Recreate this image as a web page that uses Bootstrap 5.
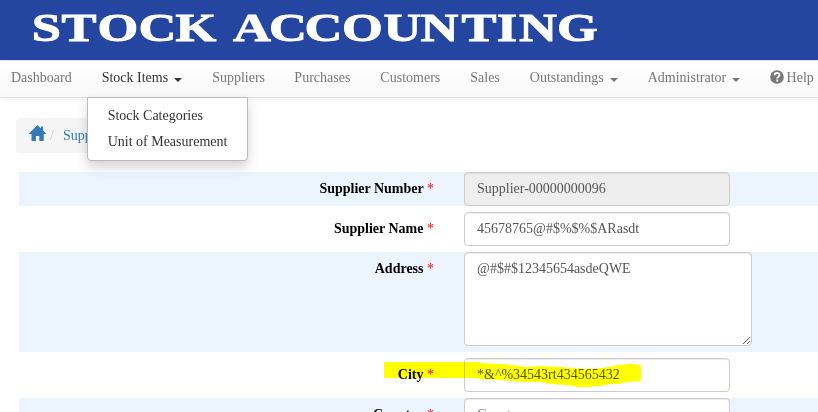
<!DOCTYPE html>
<html lang="en">
<head>
<meta charset="utf-8">
<meta name="viewport" content="width=device-width, initial-scale=1">
<title>Stock Accounting</title>
<link rel="stylesheet" href="https://cdn.jsdelivr.net/npm/bootstrap@5.3.0/dist/css/bootstrap.min.css">
<style>
body{font-family:"Liberation Serif",serif;font-size:14px;line-height:20px;height:412px;overflow:hidden;color:#333}
.banner{background:#2446a0;height:60px}
.banner text{font-family:"Liberation Serif",serif;font-weight:700;font-size:41px;fill:#fff;stroke:#fff;stroke-width:.9px;text-anchor:middle}
.main-nav{height:38px;padding:0;border-top:1px solid #e7e7e7;border-bottom:1px solid #e1e1e1;background:linear-gradient(#fff,#f8f8f8);box-shadow:0 1px 5px rgba(0,0,0,.075);z-index:5}
.main-nav .navbar-nav{margin-left:-4px}
.main-nav .nav-link{padding:7px 15px 9px!important;color:#777;white-space:nowrap}
.main-nav .nav-link.active{color:#333}
.main-nav .nav-item.snug{margin-left:-.7px}
.main-nav .dropdown-toggle::after{margin-left:6px;border-top-width:4px;border-left-width:4px;border-right-width:4px;vertical-align:0}
.main-nav .dropdown-menu{position:absolute;top:36px;left:0;min-width:161px;width:161px;height:64px;padding:5px 0;margin:0;border:1px solid #bbb;border-radius:0 0 4px 4px;box-shadow:0 6px 12px rgba(0,0,0,.175);font-size:14px}
.main-nav .dropdown-item{padding:3px 20px;color:#333}
.help-icon{margin:2px 3px 0 0}
.trail{height:35px;background:#f5f5f5;border-radius:4px;margin:20px 15px 0 16px;padding:0 13px;width:140px}
.trail a{color:#337ab7}
.trail .home-link{margin-bottom:4px}
.trail .divider{color:#ccc;margin:0 9px 0 4px}
.entry{margin:19px 0 0 19px}
.entry-row{min-height:34px;margin-bottom:6px}
.entry-row:nth-child(odd){background:#ebf4ff}
.entry-label{width:415px;padding-top:7px;font-weight:700;color:#000;text-align:right;white-space:pre}
.entry-label span{color:red;font-weight:400}
.entry .form-control{width:266px;height:34px;margin-left:30px;padding:6px 12px;font:14px/20px "Liberation Serif",serif;color:#555;border:1px solid #ccc;border-radius:4px;box-shadow:inset 0 1px 1px rgba(0,0,0,.075)}
.entry .form-control:disabled{background:#eee}
.entry textarea.form-control{width:288px;height:94px;min-height:94px;margin-bottom:6px;resize:both}
.entry .form-control::placeholder{color:#777}
.marker{left:365px;top:4px;mix-blend-mode:multiply;pointer-events:none}
</style>
</head>
<body>
<header class="banner">
<svg class="d-block" width="818" height="60" role="img">
<g transform="scale(1.28 1)">
<text y="41.5" x="36.3 61.7 92.2 123 153.1">STOCK</text>
<text y="41.5" x="196.9 225 252.7 283.2 314.5 343.4 374.2 396.1 420.3 451.2">ACCOUNTING</text>
</g>
</svg>
</header>
<nav class="navbar navbar-expand main-nav align-items-start">
<ul class="navbar-nav">
<li class="nav-item"><a class="nav-link" href="#">Dashboard</a></li>
<li class="nav-item dropdown"><a class="nav-link active dropdown-toggle" href="#">Stock Items</a>
<ul class="dropdown-menu show">
<li><a class="dropdown-item" href="#">Stock Categories</a></li>
<li><a class="dropdown-item" href="#">Unit of Measurement</a></li>
</ul></li>
<li class="nav-item"><a class="nav-link" href="#">Suppliers</a></li>
<li class="nav-item snug"><a class="nav-link" href="#">Purchases</a></li>
<li class="nav-item"><a class="nav-link" href="#">Customers</a></li>
<li class="nav-item"><a class="nav-link" href="#">Sales</a></li>
<li class="nav-item"><a class="nav-link dropdown-toggle" href="#">Outstandings</a></li>
<li class="nav-item"><a class="nav-link dropdown-toggle" href="#">Administrator</a></li>
<li class="nav-item snug"><a class="nav-link d-flex" href="#"><svg class="help-icon" width="14" height="14" viewBox="0 0 14 14"><circle cx="7" cy="7" r="6.8" fill="#777"/><path d="M4.6 5.3C4.6 2.2 9.5 2.2 9.5 5.1C9.5 6.8 7.2 6.7 7.2 8.6M7.2 9.6V11.4" fill="none" stroke="#fff" stroke-width="1.9"/></svg>Help</a></li>
</ul>
</nav>
<div class="trail d-flex align-items-center">
<a href="#" class="d-flex home-link" aria-label="Home"><svg width="17" height="17" viewBox="0 0 17 17"><path fill="#337ab7" d="M8.5 0 12 3.4V1.5h2v3.8L17 8.5V9h-2.3v7h-4.4v-5H6.9v5H2.5V9H0v-.5Z"/></svg></a>
<span class="divider">/</span><a class="text-decoration-none" href="#">Suppliers</a>
</div>
<form class="entry">
<div class="entry-row d-flex"><label class="entry-label">Supplier Number <span>*</span></label><input class="form-control" value="Supplier-00000000096" disabled></div>
<div class="entry-row d-flex"><label class="entry-label">Supplier Name <span>*</span></label><input class="form-control" value="45678765@#$%$%$ARasdt"></div>
<div class="entry-row d-flex"><label class="entry-label">Address <span>*</span></label><textarea class="form-control">@#$#$12345654asdeQWE</textarea></div>
<div class="entry-row d-flex position-relative"><label class="entry-label">City <span>*</span></label><input class="form-control" value="*&amp;^%34543rt434565432">
<svg class="marker position-absolute" width="258" height="27" viewBox="384 362 258 27"><path fill="#ff0" d="M384 362H480V363L500 364 512 365 526 367 540 366 562 367 585 369 602 368 614 366 618 365 628 364H636V365H641V381L628 382 618 384 610 384 601 386 592 386V387H576V386L564 385 552 384 540 382 524 382 500 380 478 379V378H384Z"/></svg></div>
<div class="entry-row d-flex"><label class="entry-label">Country <span>*</span></label><input class="form-control" placeholder="Country"></div>
</form>
<script src="https://cdn.jsdelivr.net/npm/bootstrap@5.3.0/dist/js/bootstrap.bundle.min.js"></script>
</body>
</html>
